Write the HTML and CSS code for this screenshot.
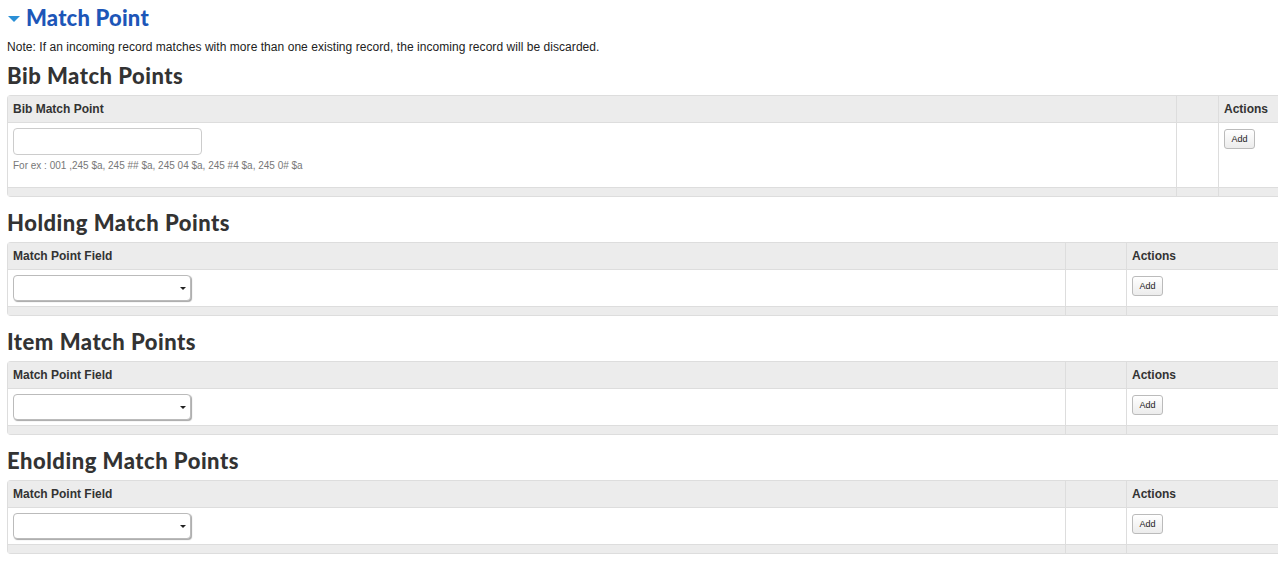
FILE: index.html
```html
<!DOCTYPE html>
<html>
<head>
    <title>Match Point</title>
    <link rel="stylesheet" href="styles.css">
</head>
<body>
    <div class="section">
        <h2 class="section-title"><span class="caret"></span>Match Point</h2>
        <p class="note">Note: If an incoming record matches with more than one existing record, the incoming record will be discarded.</p>

        <h3>Bib Match Points</h3>
        <table class="grid bib">
            <thead>
                <tr><th class="c-field">Bib Match Point</th><th class="c-gap"></th><th class="c-act">Actions</th></tr>
            </thead>
            <tbody>
                <tr>
                    <td class="c-field">
                        <input type="text" class="text-input">
                        <div class="hint">For ex : 001 ,245 $a, 245 ## $a, 245 04 $a, 245 #4 $a, 245 0# $a</div>
                    </td>
                    <td></td>
                    <td><button class="add">Add</button></td>
                </tr>
            </tbody>
            <tfoot>
                <tr><td></td><td></td><td></td></tr>
            </tfoot>
        </table>

        <h3>Holding Match Points</h3>
        <table class="grid">
            <thead>
                <tr><th class="c-field">Match Point Field</th><th class="c-gap"></th><th class="c-act">Actions</th></tr>
            </thead>
            <tbody>
                <tr>
                    <td class="c-field"><div class="select"><span class="arrow"></span></div></td>
                    <td></td>
                    <td><button class="add">Add</button></td>
                </tr>
            </tbody>
            <tfoot>
                <tr><td></td><td></td><td></td></tr>
            </tfoot>
        </table>

        <h3>Item Match Points</h3>
        <table class="grid">
            <thead>
                <tr><th class="c-field">Match Point Field</th><th class="c-gap"></th><th class="c-act">Actions</th></tr>
            </thead>
            <tbody>
                <tr>
                    <td class="c-field"><div class="select"><span class="arrow"></span></div></td>
                    <td></td>
                    <td><button class="add">Add</button></td>
                </tr>
            </tbody>
            <tfoot>
                <tr><td></td><td></td><td></td></tr>
            </tfoot>
        </table>

        <h3>Eholding Match Points</h3>
        <table class="grid">
            <thead>
                <tr><th class="c-field">Match Point Field</th><th class="c-gap"></th><th class="c-act">Actions</th></tr>
            </thead>
            <tbody>
                <tr>
                    <td class="c-field"><div class="select"><span class="arrow"></span></div></td>
                    <td></td>
                    <td><button class="add">Add</button></td>
                </tr>
            </tbody>
            <tfoot>
                <tr><td></td><td></td><td></td></tr>
            </tfoot>
        </table>
    </div>
</body>
</html>
```

FILE: styles.css
```css
body {
    font-family: "Liberation Sans", Arial, sans-serif;
    font-size: 12px;
    color: #222;
    background-color: #fff;
    margin: 0;
    overflow: hidden;
}
.section {
    padding: 0 0 0 7px;
}
.section-title {
    font-family: Lato, "Liberation Sans", sans-serif;
    font-weight: 900;
    font-size: 22px;
    letter-spacing: 0.2px;
    color: #1d56b8;
    margin: 0;
    height: 36px;
    line-height: 36px;
    display: flex;
    align-items: center;
}
.caret {
    width: 0;
    height: 0;
    border-left: 6px solid transparent;
    border-right: 6px solid transparent;
    border-top: 6px solid #2a8fd6;
    margin: 1px 6px 0 1px;
}
.note {
    margin: 4px 0 0 0;
    font-size: 12px;
    line-height: 14px;
    letter-spacing: 0.05px;
    color: #222;
}
h3 {
    font-family: Lato, "Liberation Sans", sans-serif;
    font-weight: 900;
    font-size: 22px;
    letter-spacing: 0.5px;
    color: #333;
    margin: 0;
    height: 36px;
    line-height: 34px;
}
.note + h3 {
    margin-top: 5px;
}
.grid {
    border-collapse: separate;
    border-spacing: 0;
    width: 1300px;
    border-top: 1px solid #ddd;
    border-left: 1px solid #ddd;
    border-bottom: 1px solid #ddd;
    border-radius: 4px 0 0 4px;
    margin-bottom: 9px;
}
.grid th {
    background-color: #ececec;
    text-align: left;
    font-size: 12px;
    font-weight: bold;
    color: #333;
    height: 26px;
    padding: 0 0 0 5px;
    border-bottom: 1px solid #ddd;
}
.grid th + th,
.grid td + td {
    border-left: 1px solid #ddd;
}
.grid tbody td {
    vertical-align: top;
    padding: 5px 5px 3px 5px;
    height: 28px;
}
.grid.bib tbody td {
    height: 56px;
}
.grid tfoot td {
    background-color: #ececec;
    height: 8px;
    padding: 0;
    border-top: 1px solid #ddd;
}
.grid .c-field {
    width: 1047px;
}
.grid .c-gap {
    width: 55px;
}
.grid.bib .c-field {
    width: 1158px;
}
.grid.bib .c-gap {
    width: 36px;
}
.text-input {
    display: block;
    width: 189px;
    height: 27px;
    box-sizing: border-box;
    border: 1px solid #ccc;
    border-radius: 4px;
    margin: 0;
    padding: 0 6px;
}
.hint {
    margin-top: 5px;
    font-size: 10px;
    color: #777;
}
.select {
    position: relative;
    width: 178px;
    height: 26px;
    margin-top: 0;
    box-sizing: border-box;
    border: 1px solid #bbb;
    border-radius: 4px;
    background-color: #fff;
    box-shadow: 1px 1px 1px rgba(0, 0, 0, 0.35);
}
.arrow {
    position: absolute;
    right: 4px;
    top: 11px;
    width: 0;
    height: 0;
    border-left: 3px solid transparent;
    border-right: 3px solid transparent;
    border-top: 3px solid #222;
}
.add {
    font-family: "Liberation Sans", Arial, sans-serif;
    font-size: 9px;
    color: #222;
    background: linear-gradient(#fff, #ececec);
    border: 1px solid #bbb;
    border-radius: 3px;
    width: 31px;
    height: 20px;
    padding: 0;
    margin: 1px 0 0 0;
    cursor: pointer;
}
```
